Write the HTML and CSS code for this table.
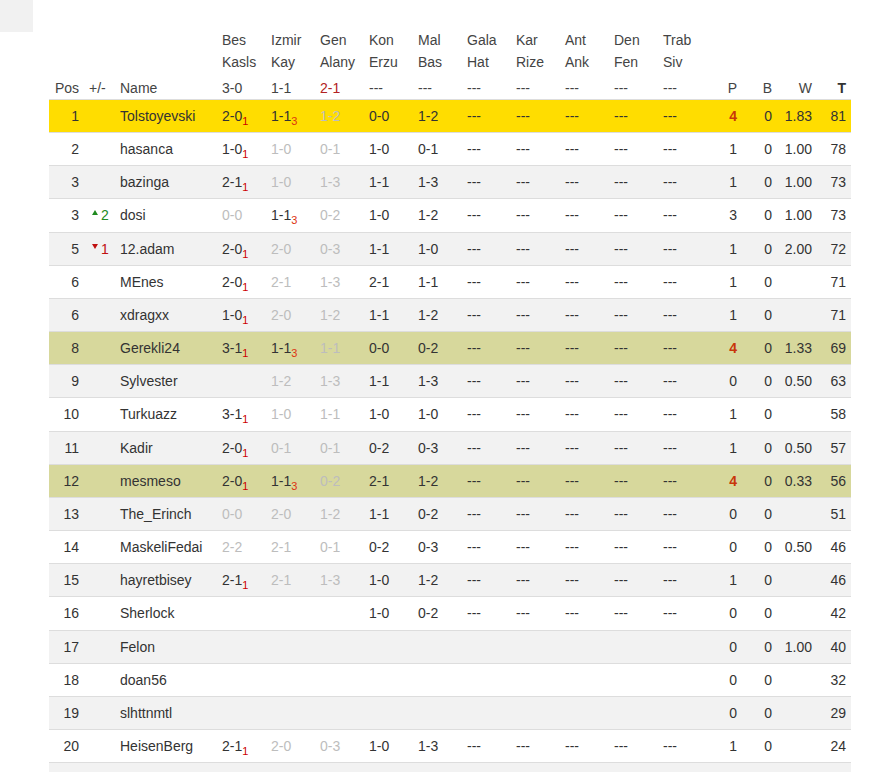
FILE: index.html
```html
<!DOCTYPE html>
<html>
<head>
<meta charset="utf-8">
<link rel="stylesheet" href="styles.css">
</head>
<body>
<div class="page">
  <div class="corner"></div>
  <div class="wrap">
    <table class="standings">
      <colgroup>
        <col class="c-pos"><col class="c-chg"><col class="c-name">
        <col class="c-m"><col class="c-m"><col class="c-m"><col class="c-m"><col class="c-m">
        <col class="c-m"><col class="c-m"><col class="c-m"><col class="c-m"><col class="c-m">
        <col class="c-p"><col class="c-b"><col class="c-w"><col class="c-t">
      </colgroup>
      <thead>
        <tr class="teams">
          <th></th><th></th><th></th>
          <th>Bes<br>Kasls</th><th>Izmir<br>Kay</th><th>Gen<br>Alany</th><th>Kon<br>Erzu</th><th>Mal<br>Bas</th>
          <th>Gala<br>Hat</th><th>Kar<br>Rize</th><th>Ant<br>Ank</th><th>Den<br>Fen</th><th>Trab<br>Siv</th>
          <th></th><th></th><th></th><th></th>
        </tr>
        <tr class="labels">
          <th class="num">Pos</th><th>+/-</th><th>Name</th>
          <th>3-0</th><th>1-1</th><th class="red">2-1</th><th>---</th><th>---</th>
          <th>---</th><th>---</th><th>---</th><th>---</th><th>---</th>
          <th class="num">P</th><th class="num">B</th><th class="num">W</th><th class="num bold">T</th>
        </tr>
      </thead>
      <tbody>
        <tr class="gold">
          <td class="num">1</td><td></td><td>Tolstoyevski</td>
          <td>2-0<sub class="s1">1</sub></td><td>1-1<sub class="s3">3</sub></td><td class="g">1-2</td><td>0-0</td><td>1-2</td>
          <td>---</td><td>---</td><td>---</td><td>---</td><td>---</td>
          <td class="num hi">4</td><td class="num">0</td><td class="num">1.83</td><td class="num">81</td>
        </tr>
        <tr>
          <td class="num">2</td><td></td><td>hasanca</td>
          <td>1-0<sub class="s1">1</sub></td><td class="g">1-0</td><td class="g">0-1</td><td>1-0</td><td>0-1</td>
          <td>---</td><td>---</td><td>---</td><td>---</td><td>---</td>
          <td class="num">1</td><td class="num">0</td><td class="num">1.00</td><td class="num">78</td>
        </tr>
        <tr>
          <td class="num">3</td><td></td><td>bazinga</td>
          <td>2-1<sub class="s1">1</sub></td><td class="g">1-0</td><td class="g">1-3</td><td>1-1</td><td>1-3</td>
          <td>---</td><td>---</td><td>---</td><td>---</td><td>---</td>
          <td class="num">1</td><td class="num">0</td><td class="num">1.00</td><td class="num">73</td>
        </tr>
        <tr>
          <td class="num">3</td><td class="up"><svg class="tri" width="6" height="5" viewBox="0 0 6 5"><path d="M3 0L6 5H0Z" fill="#1f8a1f"/></svg>2</td><td>dosi</td>
          <td class="g">0-0</td><td>1-1<sub class="s3">3</sub></td><td class="g">0-2</td><td>1-0</td><td>1-2</td>
          <td>---</td><td>---</td><td>---</td><td>---</td><td>---</td>
          <td class="num">3</td><td class="num">0</td><td class="num">1.00</td><td class="num">73</td>
        </tr>
        <tr>
          <td class="num">5</td><td class="down"><svg class="tri" width="6" height="5" viewBox="0 0 6 5"><path d="M0 0H6L3 5Z" fill="#c01010"/></svg>1</td><td>12.adam</td>
          <td>2-0<sub class="s1">1</sub></td><td class="g">2-0</td><td class="g">0-3</td><td>1-1</td><td>1-0</td>
          <td>---</td><td>---</td><td>---</td><td>---</td><td>---</td>
          <td class="num">1</td><td class="num">0</td><td class="num">2.00</td><td class="num">72</td>
        </tr>
        <tr>
          <td class="num">6</td><td></td><td>MEnes</td>
          <td>2-0<sub class="s1">1</sub></td><td class="g">2-1</td><td class="g">1-3</td><td>2-1</td><td>1-1</td>
          <td>---</td><td>---</td><td>---</td><td>---</td><td>---</td>
          <td class="num">1</td><td class="num">0</td><td class="num"></td><td class="num">71</td>
        </tr>
        <tr>
          <td class="num">6</td><td></td><td>xdragxx</td>
          <td>1-0<sub class="s1">1</sub></td><td class="g">2-0</td><td class="g">1-2</td><td>1-1</td><td>1-2</td>
          <td>---</td><td>---</td><td>---</td><td>---</td><td>---</td>
          <td class="num">1</td><td class="num">0</td><td class="num"></td><td class="num">71</td>
        </tr>
        <tr class="olive">
          <td class="num">8</td><td></td><td>Gerekli24</td>
          <td>3-1<sub class="s1">1</sub></td><td>1-1<sub class="s3">3</sub></td><td class="g">1-1</td><td>0-0</td><td>0-2</td>
          <td>---</td><td>---</td><td>---</td><td>---</td><td>---</td>
          <td class="num hi">4</td><td class="num">0</td><td class="num">1.33</td><td class="num">69</td>
        </tr>
        <tr>
          <td class="num">9</td><td></td><td>Sylvester</td>
          <td></td><td class="g">1-2</td><td class="g">1-3</td><td>1-1</td><td>1-3</td>
          <td>---</td><td>---</td><td>---</td><td>---</td><td>---</td>
          <td class="num">0</td><td class="num">0</td><td class="num">0.50</td><td class="num">63</td>
        </tr>
        <tr>
          <td class="num">10</td><td></td><td>Turkuazz</td>
          <td>3-1<sub class="s1">1</sub></td><td class="g">1-0</td><td class="g">1-1</td><td>1-0</td><td>1-0</td>
          <td>---</td><td>---</td><td>---</td><td>---</td><td>---</td>
          <td class="num">1</td><td class="num">0</td><td class="num"></td><td class="num">58</td>
        </tr>
        <tr>
          <td class="num">11</td><td></td><td>Kadir</td>
          <td>2-0<sub class="s1">1</sub></td><td class="g">0-1</td><td class="g">0-1</td><td>0-2</td><td>0-3</td>
          <td>---</td><td>---</td><td>---</td><td>---</td><td>---</td>
          <td class="num">1</td><td class="num">0</td><td class="num">0.50</td><td class="num">57</td>
        </tr>
        <tr class="olive">
          <td class="num">12</td><td></td><td>mesmeso</td>
          <td>2-0<sub class="s1">1</sub></td><td>1-1<sub class="s3">3</sub></td><td class="g">0-2</td><td>2-1</td><td>1-2</td>
          <td>---</td><td>---</td><td>---</td><td>---</td><td>---</td>
          <td class="num hi">4</td><td class="num">0</td><td class="num">0.33</td><td class="num">56</td>
        </tr>
        <tr>
          <td class="num">13</td><td></td><td>The_Erinch</td>
          <td class="g">0-0</td><td class="g">2-0</td><td class="g">1-2</td><td>1-1</td><td>0-2</td>
          <td>---</td><td>---</td><td>---</td><td>---</td><td>---</td>
          <td class="num">0</td><td class="num">0</td><td class="num"></td><td class="num">51</td>
        </tr>
        <tr>
          <td class="num">14</td><td></td><td>MaskeliFedai</td>
          <td class="g">2-2</td><td class="g">2-1</td><td class="g">0-1</td><td>0-2</td><td>0-3</td>
          <td>---</td><td>---</td><td>---</td><td>---</td><td>---</td>
          <td class="num">0</td><td class="num">0</td><td class="num">0.50</td><td class="num">46</td>
        </tr>
        <tr>
          <td class="num">15</td><td></td><td>hayretbisey</td>
          <td>2-1<sub class="s1">1</sub></td><td class="g">2-1</td><td class="g">1-3</td><td>1-0</td><td>1-2</td>
          <td>---</td><td>---</td><td>---</td><td>---</td><td>---</td>
          <td class="num">1</td><td class="num">0</td><td class="num"></td><td class="num">46</td>
        </tr>
        <tr>
          <td class="num">16</td><td></td><td>Sherlock</td>
          <td></td><td></td><td></td><td>1-0</td><td>0-2</td>
          <td>---</td><td>---</td><td>---</td><td>---</td><td>---</td>
          <td class="num">0</td><td class="num">0</td><td class="num"></td><td class="num">42</td>
        </tr>
        <tr>
          <td class="num">17</td><td></td><td>Felon</td>
          <td></td><td></td><td></td><td></td><td></td>
          <td></td><td></td><td></td><td></td><td></td>
          <td class="num">0</td><td class="num">0</td><td class="num">1.00</td><td class="num">40</td>
        </tr>
        <tr>
          <td class="num">18</td><td></td><td>doan56</td>
          <td></td><td></td><td></td><td></td><td></td>
          <td></td><td></td><td></td><td></td><td></td>
          <td class="num">0</td><td class="num">0</td><td class="num"></td><td class="num">32</td>
        </tr>
        <tr>
          <td class="num">19</td><td></td><td>slhttnmtl</td>
          <td></td><td></td><td></td><td></td><td></td>
          <td></td><td></td><td></td><td></td><td></td>
          <td class="num">0</td><td class="num">0</td><td class="num"></td><td class="num">29</td>
        </tr>
        <tr>
          <td class="num">20</td><td></td><td>HeisenBerg</td>
          <td>2-1<sub class="s1">1</sub></td><td class="g">2-0</td><td class="g">0-3</td><td>1-0</td><td>1-3</td>
          <td>---</td><td>---</td><td>---</td><td>---</td><td>---</td>
          <td class="num">1</td><td class="num">0</td><td class="num"></td><td class="num">24</td>
        </tr>
        <tr>
          <td class="num">&nbsp;</td><td></td><td></td>
          <td></td><td></td><td></td><td></td><td></td>
          <td></td><td></td><td></td><td></td><td></td>
          <td></td><td></td><td></td><td></td>
        </tr>
      </tbody>
    </table>
  </div>
</div>
</body>
</html>
```

FILE: styles.css
```css
html, body {
  margin: 0;
  padding: 0;
  background: #ffffff;
}

.page {
  display: flex;
  align-items: flex-start;
}

.corner {
  width: 33px;
  height: 32px;
  background: #f1f1f1;
  flex: none;
}

.wrap {
  margin-left: 16px;
  padding-top: 29px;
}

.standings {
  border-collapse: collapse;
  table-layout: fixed;
  width: 802px;
  font-family: "Liberation Sans", Arial, sans-serif;
  font-size: 14px;
  color: #333333;
}

.c-pos { width: 35px; }
.c-chg { width: 31px; }
.c-name { width: 102px; }
.c-m { width: 49px; }
.c-p { width: 35px; }
.c-b { width: 35px; }
.c-w { width: 40px; }
.c-t { width: 34px; }

.standings th {
  font-weight: normal;
  text-align: left;
  color: #444444;
  white-space: nowrap;
}

.standings .teams th {
  line-height: 22px;
  padding: 0 5px;
  vertical-align: bottom;
}

.standings .labels th {
  padding: 7px 5px 3px;
  line-height: 16px;
  vertical-align: bottom;
}

.standings th.red {
  color: #b22222;
}

.standings th.bold {
  font-weight: bold;
  color: #333333;
}

.standings td {
  padding: 8px 5px;
  line-height: 16.15px;
  border-top: 1px solid #dddddd;
  white-space: nowrap;
  text-align: left;
}

.standings .num {
  text-align: right;
}

.standings tbody tr:nth-child(odd) {
  background: #f2f2f2;
}

.standings tbody tr.gold {
  background: #ffdd00;
}

.standings tbody tr.olive {
  background: #d7d89c;
}

.standings td.g {
  color: #bdbdbd;
}

.standings sub {
  font-size: 11px;
  line-height: 0;
  vertical-align: -4px;
}

.standings sub.s1 {
  color: #cc0000;
}

.standings sub.s3 {
  color: #dd3311;
}

.standings td.hi {
  font-weight: bold;
  color: #c8360a;
}

.standings td.up {
  color: #228b22;
}

.standings td.down {
  color: #c01010;
}

.tri {
  display: inline-block;
  margin: 0 3px 0 3px;
  vertical-align: 5px;
}
```
